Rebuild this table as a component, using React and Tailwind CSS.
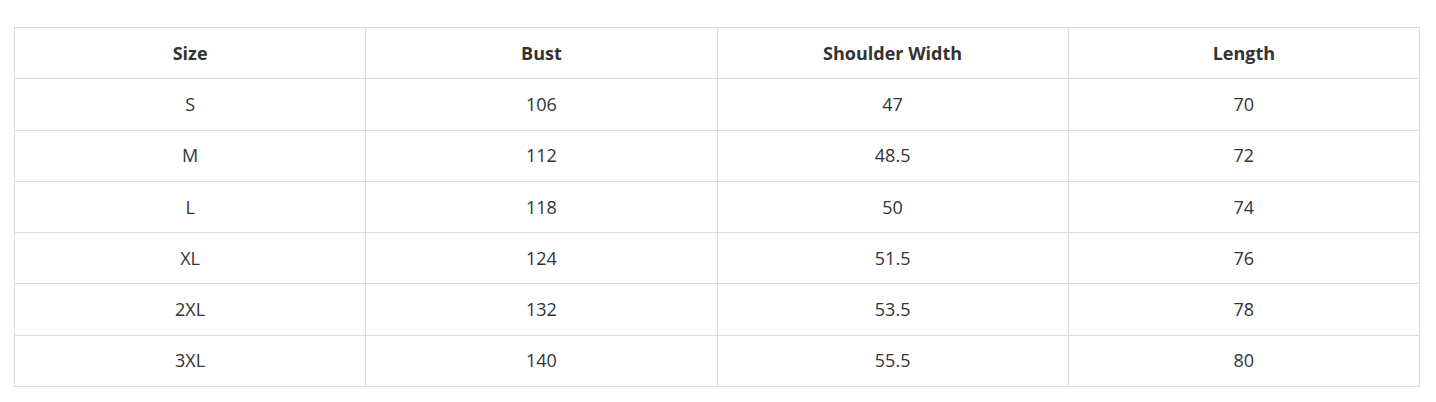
import React from 'react';

const rows = [
  ['S', '106', '47', '70'],
  ['M', '112', '48.5', '72'],
  ['L', '118', '50', '74'],
  ['XL', '124', '51.5', '76'],
  ['2XL', '132', '53.5', '78'],
  ['3XL', '140', '55.5', '80'],
];

export default function App() {
  return (
    <div className="bg-white pt-[27px] pl-[14px] pr-[16px] h-[402px] font-['Open_Sans',sans-serif] text-[#333]">
      <table className="w-full border-collapse table-fixed text-[18px]">
        <thead>
          <tr className="h-[51.3px]">
            {['Size', 'Bust', 'Shoulder Width', 'Length'].map((h) => (
              <th key={h} className="border border-[#dcdcdc] font-bold text-center p-0">
                {h}
              </th>
            ))}
          </tr>
        </thead>
        <tbody>
          {rows.map((r) => (
            <tr key={r[0]} className="h-[51.3px]">
              {r.map((c, i) => (
                <td key={i} className="border border-[#dcdcdc] text-center p-0">
                  {c}
                </td>
              ))}
            </tr>
          ))}
        </tbody>
      </table>
    </div>
  );
}
